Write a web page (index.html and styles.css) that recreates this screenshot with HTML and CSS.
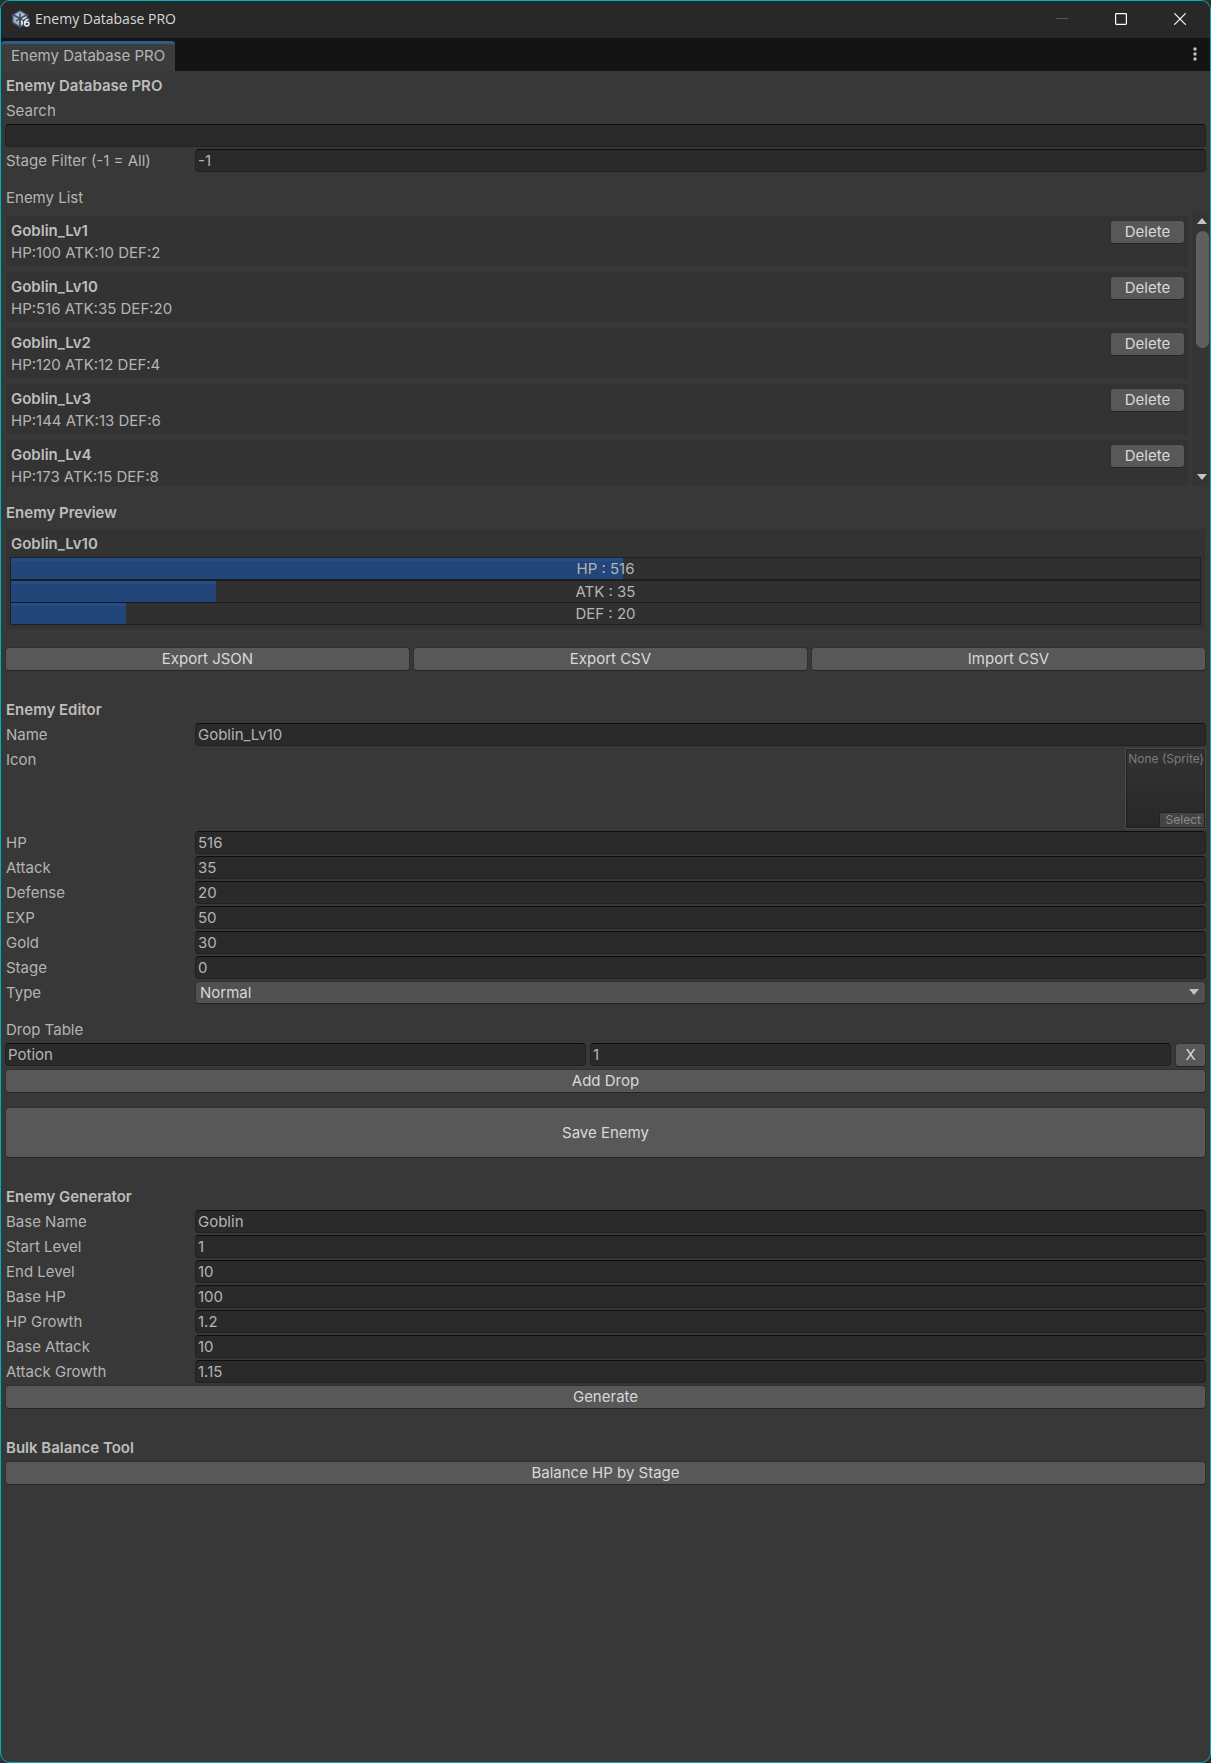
FILE: index.html
```html
<!DOCTYPE html>
<html lang="en">
<head>
  <meta charset="utf-8">
  <meta name="viewport" content="width=device-width">
  <title>Enemy Database PRO</title>
  <link rel="stylesheet" href="styles.css">
</head>
<body>
<div class="window">

  <header class="titlebar">
    <svg class="logo" width="20" height="20" viewBox="0 0 20 20">
      <path d="M9 1l8 4.500v8.500l-8 5-8-5V5.500z" fill="#44566a"/>
      <path d="M9 2.500l5.500 3L9 8.500l-5.500-3z" fill="#b3c3d1"/>
      <path d="M2.500 7l5.500 3v6.500l-5.500-3.500z" fill="#a3b5c5"/>
      <path d="M15.500 7L10 10v6.500l5.500-3.500z" fill="#d3dde6"/>
      <path d="M9 4v5.500M9 9.500L5 12M9 9.500l4 2.500" stroke="#34424f" stroke-width="1.300" fill="none"/>
      <path d="M12 11l3-2h4v9h-5l-2-2z" fill="#34424f"/>
      <path d="M17.500 10.500c-2.500 0-4 1.500-4 4 0 3.200 4.500 3.200 4.500.3 0-2.300-3.200-2.300-4.200-.3" stroke="#e6ecf1" stroke-width="1.500" fill="none"/>
    </svg>
    <span class="caption">Enemy Database PRO</span>
    <button class="win-btn" aria-label="Minimize" disabled>
      <svg width="12" height="12" viewBox="0 0 12 12"><path d="M0 5.500h12" stroke="#5a5a5a"/></svg>
    </button>
    <button class="win-btn" aria-label="Maximize">
      <svg width="12" height="12" viewBox="0 0 12 12"><rect x=".6" y=".6" width="10.800" height="10.800" rx=".8" fill="none" stroke="#fff" stroke-width="1.200"/></svg>
    </button>
    <button class="win-btn" aria-label="Close">
      <svg width="12" height="12" viewBox="0 0 12 12"><path d="M.3.300l11.400 11.400M11.700.300L.3 11.700" stroke="#fff" stroke-width="1.200"/></svg>
    </button>
  </header>

  <nav class="tabs">
    <a class="tab" href="#">Enemy Database PRO</a>
    <button class="menu-btn" aria-label="Menu">
      <svg width="4" height="14" viewBox="0 0 4 14" fill="#c4c4c4"><circle cx="2" cy="2" r="1.700"/><circle cx="2" cy="7" r="1.700"/><circle cx="2" cy="12" r="1.700"/></svg>
    </button>
  </nav>

  <main class="content">
    <section class="group">
      <h1>Enemy Database PRO</h1>
      <label class="line" for="search">Search</label>
      <input type="text" id="search">
      <div class="row"><label for="stageFilter">Stage Filter (-1 = All)</label><input type="text" id="stageFilter" value="-1"></div>
    </section>

    <section class="group">
      <div class="line">Enemy List</div>
      <div class="scroll">
        <div class="list">
          <div class="box enemy">
            <div><h3>Goblin_Lv1</h3><p>HP:100 ATK:10 DEF:2</p></div>
            <button class="btn">Delete</button>
          </div>
          <div class="box enemy">
            <div><h3>Goblin_Lv10</h3><p>HP:516 ATK:35 DEF:20</p></div>
            <button class="btn">Delete</button>
          </div>
          <div class="box enemy">
            <div><h3>Goblin_Lv2</h3><p>HP:120 ATK:12 DEF:4</p></div>
            <button class="btn">Delete</button>
          </div>
          <div class="box enemy">
            <div><h3>Goblin_Lv3</h3><p>HP:144 ATK:13 DEF:6</p></div>
            <button class="btn">Delete</button>
          </div>
          <div class="box enemy">
            <div><h3>Goblin_Lv4</h3><p>HP:173 ATK:15 DEF:8</p></div>
            <button class="btn">Delete</button>
          </div>
        </div>
        <div class="scrollbar">
          <svg width="10" height="6" viewBox="0 0 10 6"><path d="M0 6l5-6 5 6z" fill="#c4c4c4"/></svg>
          <div class="track"><div class="thumb"></div></div>
          <svg width="10" height="6" viewBox="0 0 10 6"><path d="M0 0l5 6 5-6z" fill="#c4c4c4"/></svg>
        </div>
      </div>
    </section>

    <section class="group preview">
      <h2>Enemy Preview</h2>
      <div class="box stats">
        <h3>Goblin_Lv10</h3>
        <div class="bar"><div class="fill" style="width: 51.5%"></div><span>HP : 516</span></div>
        <div class="bar"><div class="fill" style="width: 17.2%"></div><span>ATK : 35</span></div>
        <div class="bar"><div class="fill" style="width: 9.7%"></div><span>DEF : 20</span></div>
      </div>
    </section>

    <div class="files">
      <button class="btn json">Export JSON</button>
      <button class="btn">Export CSV</button>
      <button class="btn">Import CSV</button>
    </div>

    <section class="group editor">
      <h2>Enemy Editor</h2>
      <div class="row"><label for="name">Name</label><input type="text" id="name" value="Goblin_Lv10"></div>
      <div class="row icon-row">
        <label for="icon">Icon</label>
        <div class="sprite">
          <span>None (Sprite)</span>
          <button id="icon">Select</button>
        </div>
      </div>
      <div class="row"><label for="hp">HP</label><input type="text" id="hp" value="516"></div>
      <div class="row"><label for="attack">Attack</label><input type="text" id="attack" value="35"></div>
      <div class="row"><label for="defense">Defense</label><input type="text" id="defense" value="20"></div>
      <div class="row"><label for="exp">EXP</label><input type="text" id="exp" value="50"></div>
      <div class="row"><label for="gold">Gold</label><input type="text" id="gold" value="30"></div>
      <div class="row"><label for="stage">Stage</label><input type="text" id="stage" value="0"></div>
      <div class="row">
        <label for="type">Type</label>
        <div class="dropdown">
          <select id="type"><option>Normal</option></select>
          <svg width="10" height="6" viewBox="0 0 10 6"><path d="M0 0l5 6 5-6z" fill="#c4c4c4"/></svg>
        </div>
      </div>
    </section>

    <section class="group">
      <div class="line">Drop Table</div>
      <div class="drop">
        <input type="text" aria-label="Item" value="Potion">
        <input type="text" aria-label="Chance" value="1">
        <button class="btn">X</button>
      </div>
      <button class="btn">Add Drop</button>
    </section>

    <button class="btn save">Save Enemy</button>

    <section class="group generator">
      <h2>Enemy Generator</h2>
      <div class="row"><label for="baseName">Base Name</label><input type="text" id="baseName" value="Goblin"></div>
      <div class="row"><label for="startLevel">Start Level</label><input type="text" id="startLevel" value="1"></div>
      <div class="row"><label for="endLevel">End Level</label><input type="text" id="endLevel" value="10"></div>
      <div class="row"><label for="baseHp">Base HP</label><input type="text" id="baseHp" value="100"></div>
      <div class="row"><label for="hpGrowth">HP Growth</label><input type="text" id="hpGrowth" value="1.2"></div>
      <div class="row"><label for="baseAttack">Base Attack</label><input type="text" id="baseAttack" value="10"></div>
      <div class="row"><label for="attackGrowth">Attack Growth</label><input type="text" id="attackGrowth" value="1.15"></div>
      <button class="btn">Generate</button>
    </section>

    <section class="group balance">
      <h2>Bulk Balance Tool</h2>
      <button class="btn">Balance HP by Stage</button>
    </section>
  </main>

</div>
</body>
</html>
```
FILE: styles.css
```css
* {
  box-sizing: border-box;
}

body {
  margin: 0;
  background: #303030;
  color: #b4b4b4;
  font-family: Inter, sans-serif;
  font-size: 15px;
  line-height: 23px;
}

h1, h2, h3, p {
  margin: 0;
  font-size: 15px;
}

h1, h2, h3 {
  font-weight: 600;
  color: #bdbdbd;
}

button, input, select {
  margin: 0;
  font: inherit;
}

.window {
  display: flex;
  flex-direction: column;
  min-height: 100vh;
  border: 1px solid #00b0bf;
  border-radius: 10px;
  background: #383838;
  overflow: hidden;
}

/* title bar */

.titlebar {
  display: flex;
  align-items: center;
  height: 37px;
  padding: 0 1px 2px 10px;
  background: #282828;
}

.caption {
  flex: 1;
  margin-left: 4px;
  font-family: "Open Sans", sans-serif;
  font-size: 14px;
  color: #d8d8d8;
}

.win-btn {
  display: flex;
  align-items: center;
  justify-content: center;
  width: 59px;
  height: 35px;
  padding: 0;
  border: 0;
  background: none;
}

.tabs {
  display: flex;
  align-items: flex-end;
  justify-content: space-between;
  height: 33px;
  background: #141414;
}

.tab {
  height: 30px;
  padding: 0 10px;
  border-top: 3px solid #2c5d87;
  border-radius: 3px 3px 0 0;
  background: #3c3c3c;
  color: #b4b4b4;
  line-height: 24px;
  text-decoration: none;
}

.menu-btn {
  display: flex;
  align-items: center;
  height: 33px;
  padding: 0 13px 2px;
  border: 0;
  background: none;
}

/* shared controls */

.content {
  flex: 1;
  padding: 3px 4px 8px;
}

.group {
  display: flex;
  flex-direction: column;
  gap: 2px;
  margin-bottom: 14px;
}

h1, h2, .line, .row label {
  padding-left: 1px;
}

.row {
  display: flex;
}

.row label {
  width: 190px;
}

input {
  width: 100%;
  min-width: 0;
  height: 23px;
  padding: 0 2px;
  border: 1px solid #212121;
  border-top-color: #0d0d0d;
  border-radius: 4px;
  background: #2a2a2a;
  color: #b4b4b4;
}

.row input, .dropdown {
  flex: 1;
}

.btn {
  height: 24px;
  padding: 0;
  border: 1px solid #303030;
  border-bottom-color: #242424;
  border-radius: 4px;
  background: #585858;
  color: #d8d8d8;
  line-height: 20px;
}

.box {
  background: #333;
}

/* enemy list */

.scroll {
  display: flex;
  height: 275px;
  margin-right: -3px;
  overflow: hidden;
}

.list {
  display: flex;
  flex: 1;
  flex-direction: column;
  gap: 5px;
  padding: 5px 5px 0 1px;
}

.enemy {
  display: flex;
  flex: none;
  justify-content: space-between;
  height: 51px;
  padding: 4px 3px 0 5px;
}

.enemy h3 {
  line-height: 21px;
}

.enemy .btn {
  width: 75px;
}

.scrollbar {
  display: flex;
  flex-direction: column;
  align-items: center;
  width: 16px;
  padding: 7px 0 6px 1px;
  border-left: 1px solid #2e2e2e;
  background: #353535;
}

.track {
  flex: 1;
  width: 13px;
  padding: 7px 0;
}

.thumb {
  height: 117px;
  border-radius: 7px;
  background: #5f5f5f;
}

/* preview */

.preview {
  margin-top: 15px;
}

.preview h2 {
  margin-bottom: 3px;
}

.stats {
  margin: 0 1px;
  padding: 3px 4px 4px;
}

.stats h3 {
  height: 25px;
  padding-left: 1px;
}

.bar {
  position: relative;
  height: 23px;
  border: 1px solid #202020;
  background: #303030;
  text-align: center;
  line-height: 21px;
}

.bar + .bar {
  border-top-color: #1a1a1a;
}

.bar:last-child {
  margin-top: -1px;
}

.fill {
  position: absolute;
  top: 0;
  left: 0;
  height: 100%;
  border-top: 3px solid #234e8a;
  background: #22457a;
}

.bar span {
  position: relative;
}

.files {
  display: flex;
  gap: 3px;
  margin-top: 18px;
}

.files .btn {
  flex: 1;
}

.files .json {
  flex-grow: 1.025;
}

/* editor */

.editor, .generator, .balance {
  margin-top: 27px;
}

.icon-row {
  justify-content: space-between;
}

.sprite {
  display: flex;
  flex-direction: column;
  justify-content: space-between;
  align-items: flex-end;
  width: 81px;
  height: 81px;
  padding-right: 1px;
  border: 1px solid #4a4a4a;
  background: linear-gradient(#333, #282828);
  box-shadow: inset 0 0 2px #111;
  color: #7c7c7c;
  font-size: 12px;
  line-height: 20px;
  white-space: nowrap;
}

.sprite button {
  height: 15px;
  margin-bottom: 1px;
  padding: 0 3px 0 6px;
  border: 1px solid #222;
  border-width: 1px 0 0 1px;
  background: #444;
  color: #8a8a8a;
  line-height: 12px;
}

.dropdown {
  position: relative;
}

.dropdown select {
  display: block;
  width: 100%;
  height: 23px;
  padding: 0 4px;
  border: 1px solid #303030;
  border-bottom-color: #242424;
  border-radius: 4px;
  background: #515151;
  color: #d8d8d8;
  line-height: 20px;
  appearance: none;
}

.dropdown svg {
  position: absolute;
  top: 8px;
  right: 7px;
  pointer-events: none;
}

.drop {
  display: flex;
  gap: 4px;
}

.drop input {
  flex: 1;
}

.drop .btn {
  flex: none;
  width: 31px;
}

.save {
  width: 100%;
  height: 51px;
}
```
